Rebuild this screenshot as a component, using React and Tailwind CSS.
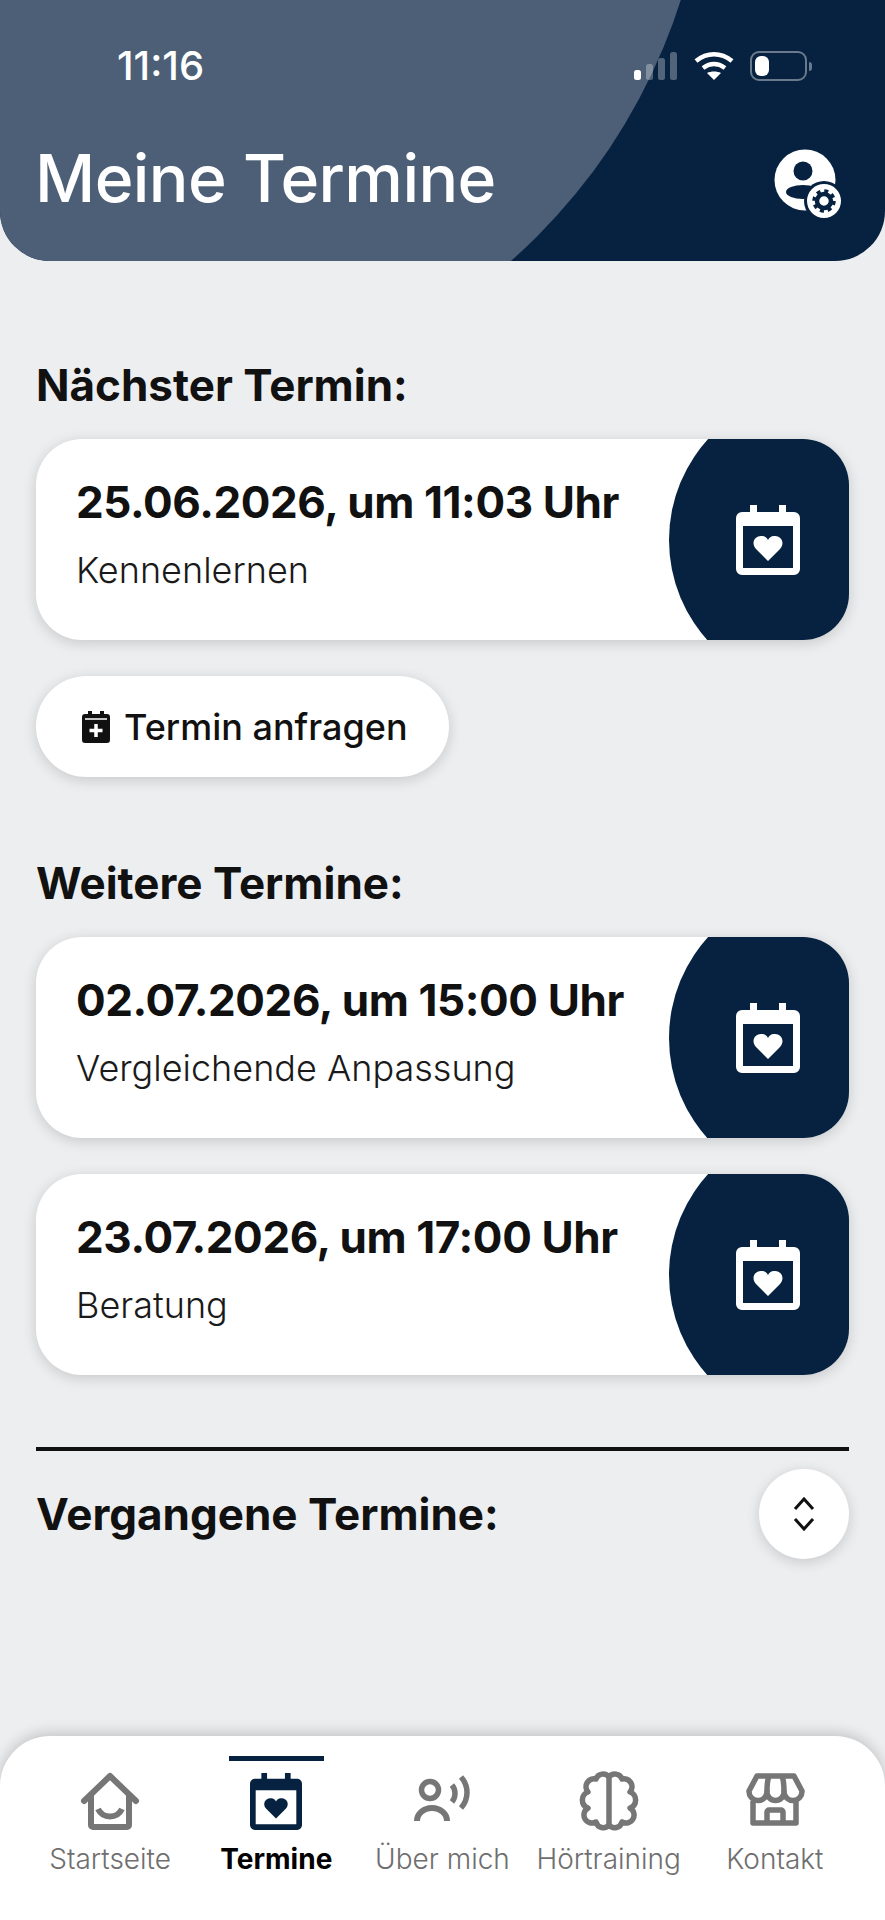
import React from "react";

const NAVY = "#062240";

// calendar with heart, used on the cards and in the tab bar
const CalendarHeart = ({ className }) => (
  <svg viewBox="0 0 64 70" className={className} fill="currentColor">
    <path
      fillRule="evenodd"
      d="M14 0h7v7h22V0h7v7h8a6 6 0 0 1 6 6v51a6 6 0 0 1-6 6H6a6 6 0 0 1-6-6V13a6 6 0 0 1 6-6h8V0ZM7 21v42h50V21H7Z"
    />
    <path d="M32 56 20 44c-6-7 0-14 6-13 3 0 5 2 6 4 1-2 3-4 6-4 6-1 12 6 6 13L32 56Z" />
  </svg>
);

const CalendarPlus = () => (
  <svg viewBox="0 0 28 32" className="w-[28px] h-[32px]" fill="#111111">
    <path d="M6 0h4v3h8V0h4v3h3a3 3 0 0 1 3 3v23a3 3 0 0 1-3 3H3a3 3 0 0 1-3-3V6a3 3 0 0 1 3-3h3V0Z" />
    <path d="M3 8h22" stroke="#ffffff" strokeWidth="1.5" />
    <path d="M14 13v13M7.5 19.5h13" stroke="#ffffff" strokeWidth="3.5" />
  </svg>
);

const HomeIcon = () => (
  <svg viewBox="0 0 80 75" className="w-[80px] h-[75px]" fill="none" stroke="currentColor" strokeWidth="6" strokeLinejoin="round" strokeLinecap="round">
    <path d="M14 36 40 11l26 25" />
    <path d="M21 31v29a2 2 0 0 0 2 2h34a2 2 0 0 0 2-2V31" />
    <path d="M28 44c5 10 19 10 24 0" strokeLinecap="butt" />
  </svg>
);

const PersonSoundIcon = () => (
  <svg viewBox="-4 0 80 75" className="w-[80px] h-[75px]" fill="none" stroke="currentColor" strokeWidth="5.5">
    <circle cx="24" cy="25" r="8.5" />
    <path d="M11 56A15 13 0 0 1 41 56" strokeWidth="6" />
    <path d="M46 20c4 5 4 12 0 17" />
    <path d="M55 12c8 9 8 22 0 31" />
  </svg>
);

const BrainIcon = () => (
  <svg viewBox="-11 -7 80 75" className="w-[80px] h-[75px]" fill="none" stroke="currentColor" strokeWidth="5.5" strokeLinejoin="round">
    <path d="M29 5v48" />
    <path d="M29 5A7.5 7.5 0 0 1 42 7A8 8 0 0 1 50 20A8.5 8.5 0 0 1 50 36A8 8 0 0 1 42 50A7.5 7.5 0 0 1 29 53A7.5 7.5 0 0 1 16 50A8 8 0 0 1 8 36A8.5 8.5 0 0 1 8 20A8 8 0 0 1 16 7A7.5 7.5 0 0 1 29 5Z" />
  </svg>
);

const StoreIcon = () => (
  <svg viewBox="-1 0 80 75" className="w-[80px] h-[75px]" fill="none" stroke="currentColor" strokeWidth="5.5" strokeLinejoin="round">
    <path d="M21 11h37l8 15a9 9 0 0 1-18 1a8.5 8.5 0 0 1-17 0a9 9 0 0 1-18-1L21 11Z" />
    <path d="M33 11c-2 5-2 11-2 16" />
    <path d="M46 11c2 5 2 11 2 16" />
    <path d="M17 36v22h43V36" />
    <path d="M31 58V47a2 2 0 0 1 2-2h12a2 2 0 0 1 2 2v11" />
  </svg>
);

const ProfileGear = () => (
  <svg viewBox="0 0 72 72" className="w-[72px] h-[72px]">
    <circle cx="32" cy="31" r="30.5" fill="#ffffff" />
    <circle cx="30" cy="22" r="9.5" fill={NAVY} />
    <ellipse cx="30" cy="43" rx="17" ry="7" fill={NAVY} />
    <circle cx="51" cy="52" r="20" fill={NAVY} />
    <circle cx="51" cy="52" r="17" fill="#ffffff" />
    <circle cx="51" cy="52" r="7" fill="none" stroke={NAVY} strokeWidth="4.5" />
    <circle cx="51" cy="52" r="10" fill="none" stroke={NAVY} strokeWidth="3.5" strokeDasharray="4 3.85" />
  </svg>
);

const StatusIcons = () => (
  <div className="flex items-center gap-[16px]">
    <svg viewBox="0 0 44 28" className="w-[44px] h-[28px]" fill="#ffffff">
      <rect x="0" y="18" width="7" height="10" rx="2.5" />
      <rect x="12" y="12" width="7" height="16" rx="2.5" fillOpacity="0.3" />
      <rect x="24" y="6" width="7" height="22" rx="2.5" fillOpacity="0.3" />
      <rect x="36" y="0" width="7" height="28" rx="2.5" fillOpacity="0.3" />
    </svg>
    <svg viewBox="0 0 40 28" className="w-[40px] h-[28px]" fill="none" stroke="#ffffff" strokeWidth="4.5">
      <path d="M2 9c11-9 25-9 36 0" />
      <path d="M9 16c7-5 15-5 22 0" />
      <path d="M20 28l-7-7c4-2 10-2 14 0l-7 7Z" fill="#ffffff" stroke="none" />
    </svg>
    <div className="flex items-center gap-[2px]">
      <div className="w-[57px] h-[30px] rounded-[9px] border-2 border-white/40 p-[3px]">
        <div className="w-[14px] h-full rounded-[6px] bg-white" />
      </div>
      <div className="w-[3px] h-[9px] rounded-r-full bg-white/40" />
    </div>
  </div>
);

const AppointmentCard = ({ date, title }) => (
  <div className="flex h-[201px] rounded-[46px] bg-white overflow-hidden shadow-[0_3px_14px_rgba(0,0,0,0.16)]">
    <div className="flex-1 pl-[40px] pt-[35px]">
      <div className="text-[44px] leading-[56px] font-bold tracking-[-0.4px] text-[#111111] whitespace-nowrap">{date}</div>
      <div className="mt-[18px] text-[36px] leading-[44px] font-light text-[#1a1a1a] whitespace-nowrap">{title}</div>
    </div>
    <div className="relative w-[180px] flex items-center justify-center pl-[17px]">
      <div className="absolute left-0 top-1/2 -translate-y-1/2 w-[300px] h-[300px] rounded-full bg-[#062240]" />
      <CalendarHeart className="relative w-[64px] h-[70px] text-white" />
    </div>
  </div>
);

const NavItem = ({ label, icon, active }) => (
  <div className="relative flex flex-col items-center">
    {active && <div className="absolute top-[20px] w-[95px] h-[5px] bg-[#062240]" />}
    <div className={`h-[75px] mt-[29px] flex items-start justify-center ${active ? "pt-[8px] text-[#062240]" : "text-[#767676]"}`}>
      {icon}
    </div>
    <div className={`mt-[2px] text-[28px] leading-[34px] whitespace-nowrap ${active ? "font-bold text-black" : "font-light text-[#6f6f6f]"}`}>
      {label}
    </div>
  </div>
);

export default function App() {
  return (
    <div className="w-[885px] h-[1920px] flex flex-col overflow-hidden bg-[#eceef0] font-['Inter',sans-serif]">
      {/* Header */}
      <header className="relative h-[261px] shrink-0 overflow-hidden rounded-b-[50px] bg-[#062240] text-white">
        <div className="absolute left-[-458px] top-[-759px] w-[1166px] h-[1166px] rounded-full bg-[#4d5f77]" />
        <div className="relative flex items-center justify-between pt-[46px] pl-[117px] pr-[73px]">
          <span className="text-[40px] leading-[40px] font-medium">11:16</span>
          <StatusIcons />
        </div>
        <div className="relative flex items-start justify-between pl-[35px] pr-[40px] mt-[52px]">
          <h1 className="text-[66px] leading-[80px] font-medium tracking-[-0.6px] whitespace-nowrap">Meine Termine</h1>
          <div className="mt-[11px]">
            <ProfileGear />
          </div>
        </div>
      </header>

      {/* Content */}
      <main className="flex-1 px-[36px] pt-[100px]">
        <h2 className="text-[44px] leading-[48px] font-bold text-[#111111]">Nächster Termin:</h2>
        <div className="mt-[30px]">
          <AppointmentCard date="25.06.2026, um 11:03 Uhr" title="Kennenlernen" />
        </div>
        <button className="mt-[36px] flex items-center gap-[14px] w-[413px] h-[101px] pl-[46px] rounded-full bg-white shadow-[0_3px_14px_rgba(0,0,0,0.16)]">
          <CalendarPlus />
          <span className="text-[36px] font-medium text-[#111111] whitespace-nowrap">Termin anfragen</span>
        </button>

        <h2 className="mt-[82px] text-[44px] leading-[48px] font-bold text-[#111111]">Weitere Termine:</h2>
        <div className="mt-[30px] flex flex-col gap-[36px]">
          <AppointmentCard date="02.07.2026, um 15:00 Uhr" title="Vergleichende Anpassung" />
          <AppointmentCard date="23.07.2026, um 17:00 Uhr" title="Beratung" />
        </div>

        <div className="mt-[72px] h-[4px] bg-[#111111]" />
        <div className="mt-[18px] flex items-center justify-between">
          <h2 className="text-[44px] leading-[48px] font-bold text-[#111111]">Vergangene Termine:</h2>
          <button className="w-[90px] h-[90px] rounded-full bg-white flex items-center justify-center shadow-[0_3px_14px_rgba(0,0,0,0.16)]">
            <svg viewBox="0 0 22 34" className="w-[22px] h-[34px]" fill="none" stroke="#111111" strokeWidth="3">
              <path d="M2 12l9-10 9 10" />
              <path d="M2 22l9 10 9-10" />
            </svg>
          </button>
        </div>
      </main>

      {/* Tab bar */}
      <nav className="h-[184px] shrink-0 grid grid-cols-5 px-[27px] rounded-t-[50px] bg-white shadow-[0_-3px_14px_rgba(0,0,0,0.18)]">
        <NavItem label="Startseite" icon={<HomeIcon />} />
        <NavItem label="Termine" icon={<CalendarHeart className="w-[52px] h-[57px]" />} active />
        <NavItem label="Über mich" icon={<PersonSoundIcon />} />
        <NavItem label="Hörtraining" icon={<BrainIcon />} />
        <NavItem label="Kontakt" icon={<StoreIcon />} />
      </nav>
    </div>
  );
}
